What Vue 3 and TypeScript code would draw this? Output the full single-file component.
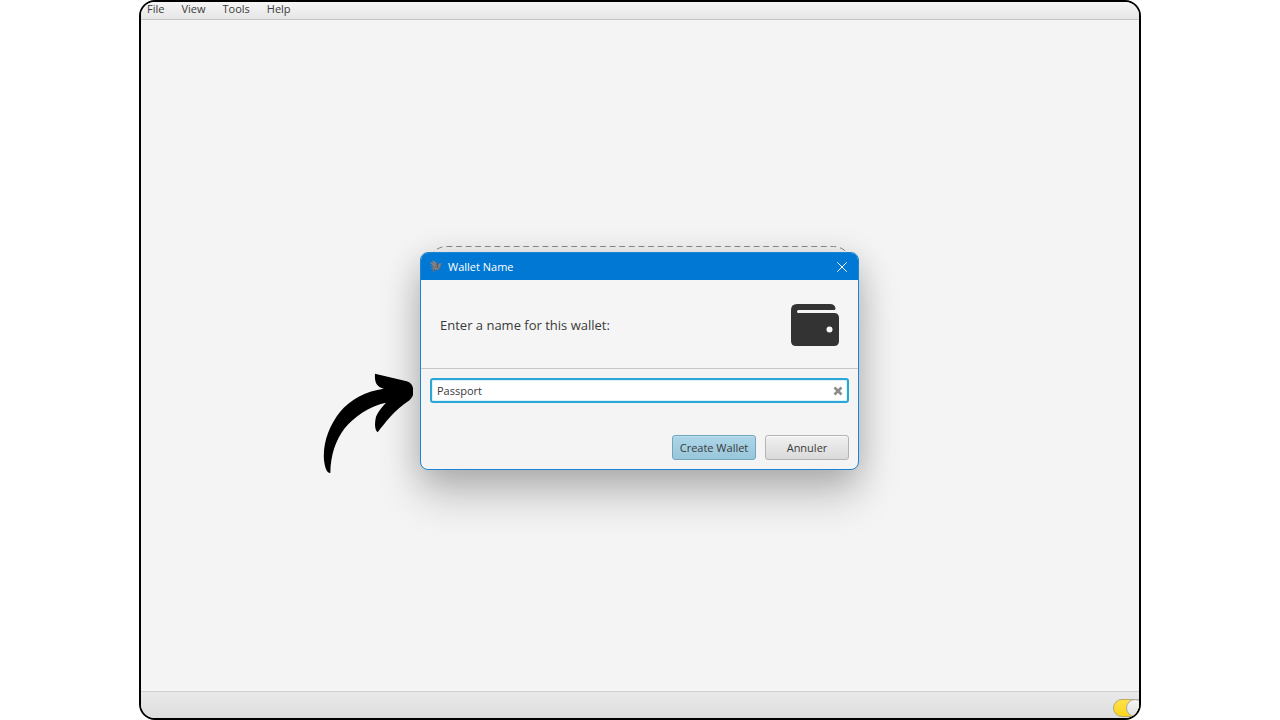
<script setup lang="ts">
import { ref } from 'vue'

const menus: string[] = ['File', 'View', 'Tools', 'Help']
const walletName = ref('Passport')
const online = ref(true)
</script>

<template>
  <div class="window">
    <nav class="menubar" aria-label="Main menu">
      <button v-for="menu in menus" :key="menu" type="button" class="menu">{{ menu }}</button>
    </nav>

    <main class="workspace">
      <svg class="dropzone" aria-hidden="true">
        <rect x=".5" y=".5" width="423" height="217" rx="18" fill="none" stroke="#8c8c8c" stroke-dasharray="5.8 3.8" />
      </svg>
    </main>

    <footer class="statusbar">
      <label class="switch">
        <input v-model="online" type="checkbox" aria-label="Server connection" />
        <span class="thumb"></span>
      </label>
    </footer>

    <div class="overlay">
      <form class="dialog" role="dialog" aria-labelledby="dialog-title" @submit.prevent>
        <header class="titlebar">
          <svg class="bird" viewBox="0 0 12 12" aria-hidden="true">
            <path d="M3 0 7 2.400 8.200 4.400 9.800 2.800 12 3.200 10.800 4.600 10.200 7.400 7.900 9.200 5.600 9.600 3.400 12 3.800 8.800 1.200 7.600 4 7 .6 4.900 3.800 4.800 0 1.600 3.800 2.800Z" fill="#77787a" />
            <path d="M3.500 1.200 6.800 3.900 7.400 6M1.800 2.700 6 5.200M8.400 6.200 10 4.300M5 8.400 7.800 7.600" fill="none" stroke="#a5a19c" stroke-width=".5" />
            <path d="M6.600 3.200 8 5.600 7.400 7.200M4.200 10 5.800 8.700" fill="none" stroke="#3c4046" stroke-width=".7" />
          </svg>
          <h1 id="dialog-title" class="title">Wallet Name</h1>
          <button type="button" class="close" aria-label="Close">
            <svg viewBox="0 0 10 10" aria-hidden="true">
              <path d="M.3.3 9.700 9.700M9.700.3.3 9.700" stroke="#fff" fill="none" />
            </svg>
          </button>
        </header>

        <div class="heading">
          <label for="wallet-name">Enter a name for this wallet:</label>
          <svg class="wallet" viewBox="0 0 48 42" aria-hidden="true">
            <path d="M6 0H39Q44 0 44.500 4.500 44.500 6 43 6H7.500Q6 6 6 7.500T7.500 9H43Q48 9 48 14V37Q48 42 43 42H5Q0 42 0 37V6Q0 0 6 0Z" fill="#333" />
            <circle cx="38.500" cy="25.500" r="3" fill="#f8f8f8" />
          </svg>
        </div>

        <div class="content">
          <div class="field">
            <input id="wallet-name" v-model="walletName" type="text" autocomplete="off" spellcheck="false" />
            <button type="button" class="clear" aria-label="Clear" @click="walletName = ''">
              <svg viewBox="0 0 10 10" aria-hidden="true">
                <path d="M1.500 1.500 8.500 8.500M8.500 1.500 1.500 8.500" stroke="#8b8b8b" stroke-width="2.500" fill="none" />
              </svg>
            </button>
          </div>
          <div class="actions">
            <button type="submit" class="button primary">Create Wallet</button>
            <button type="button" class="button">Annuler</button>
          </div>
        </div>

        <svg class="arrow" viewBox="39 39 273 303" aria-hidden="true">
          <path d="M195 41 290 64Q306 69 309 84V104Q306 116 291 126C255 150 225 188 203 217C194 210 193 190 198 170C204 155 216 140 228 128C180 137 130 172 104 205C76 243 62 285 61 339C51 340 45 325 42 300C38 250 57 197 90 156C120 118 170 93 221 86C202 80 193 70 195 41Z" fill="#000" />
        </svg>
      </form>
    </div>
  </div>
</template>

<style>
body {
  margin: 0;
  background: #fff;
}
</style>

<style scoped>
* {
  box-sizing: border-box;
}

.window {
  position: relative;
  display: flex;
  flex-direction: column;
  width: 100%;
  max-width: 1002px;
  height: 100vh;
  margin: 0 auto;
  overflow: hidden;
  border: 2px solid #000;
  border-radius: 16px;
  background: #f4f4f4;
  color: #3a3a3a;
  font-family: "Open Sans", "Noto Sans", sans-serif;
  font-size: 11px;
}

button,
input {
  font: inherit;
  color: inherit;
}

svg {
  display: block;
}

.menubar {
  display: flex;
  flex: none;
  gap: 17px;
  height: 18px;
  padding: 0 6px;
  border-bottom: 1px solid #c4c4c4;
  background: linear-gradient(#f5f5f5, #e6e6e6);
}

.menu {
  height: 13px;
  padding: 0;
  border: 0;
  background: none;
  line-height: 13px;
}

.workspace {
  display: flex;
  flex: 1;
  align-items: center;
  justify-content: center;
}

.dropzone {
  width: 424px;
  height: 219px;
}

.statusbar {
  display: flex;
  flex: none;
  justify-content: flex-end;
  height: 27px;
  padding-top: 7px;
  border-top: 1px solid #d0d0d0;
  background: linear-gradient(#e9e9e9, #dedede);
}

.switch {
  position: relative;
  width: 26px;
  height: 18px;
}

.switch input {
  display: block;
  appearance: none;
  width: 32px;
  height: 18px;
  margin: 0;
  border: 1px solid #b5aa70;
  border-radius: 9px;
  background: linear-gradient(#ffe14a, #fbd51c);
}

.thumb {
  position: absolute;
  top: 0;
  left: 13px;
  width: 18px;
  height: 18px;
  border: 1px solid #aaa;
  border-radius: 50%;
  background: linear-gradient(#f4f4f4, #e2e2e2);
  pointer-events: none;
}

.overlay {
  position: absolute;
  inset: 0;
  display: flex;
  align-items: center;
  justify-content: center;
  padding: 2px 1px 0 0;
}

.dialog {
  position: relative;
  width: 439px;
  border: 1px solid #1c84d2;
  border-radius: 8px;
  background: #f4f4f4;
  box-shadow: 0 26px 44px rgba(0, 0, 0, 0.2), 0 6px 32px rgba(0, 0, 0, 0.17);
}

.titlebar {
  display: flex;
  align-items: center;
  height: 27px;
  padding: 0 11px 0 8px;
  border-radius: 7px 7px 0 0;
  background: #0078d4;
  color: #fff;
}

.bird {
  width: 13px;
  height: 13px;
}

.title {
  flex: 1;
  margin: 0 0 0 6px;
  font-size: 11px;
  font-weight: 400;
}

.close,
.clear {
  padding: 0;
  border: 0;
  background: none;
}

.close svg,
.clear svg {
  width: 10px;
  height: 10px;
}

.heading {
  display: flex;
  align-items: center;
  justify-content: space-between;
  height: 89px;
  padding: 2px 19px 0;
  border-bottom: 1px solid #c8c8c8;
  background: #f5f5f5;
  font-size: 13px;
}

.wallet {
  width: 48px;
  height: 42px;
}

.content {
  padding: 9px;
}

.field {
  display: flex;
  align-items: center;
  height: 25px;
  padding: 0 4px 0 5px;
  border: 2px solid #2ba6d6;
  border-radius: 3px;
  background: #fff;
  box-shadow: inset 0 0 1px 1px #d8f1fa;
}

.field input {
  flex: 1;
  min-width: 0;
  padding: 0;
  border: 0;
  outline: 0;
  background: none;
}

.actions {
  display: flex;
  justify-content: flex-end;
  gap: 9px;
  margin-top: 32px;
}

.button {
  width: 84px;
  height: 25px;
  padding: 0;
  border: 1px solid #b4b4b4;
  border-radius: 3px;
  background: linear-gradient(#f0f0f0, #dadada);
  box-shadow: inset 0 1px #fafafa;
}

.primary {
  border-color: #73a6bd;
  background: linear-gradient(#add6e8, #98c6da);
  box-shadow: inset 0 1px #b9e0f0;
}

.arrow {
  position: absolute;
  top: 120px;
  right: 100%;
  width: 91px;
  height: 101px;
  margin-right: 7px;
}
</style>
